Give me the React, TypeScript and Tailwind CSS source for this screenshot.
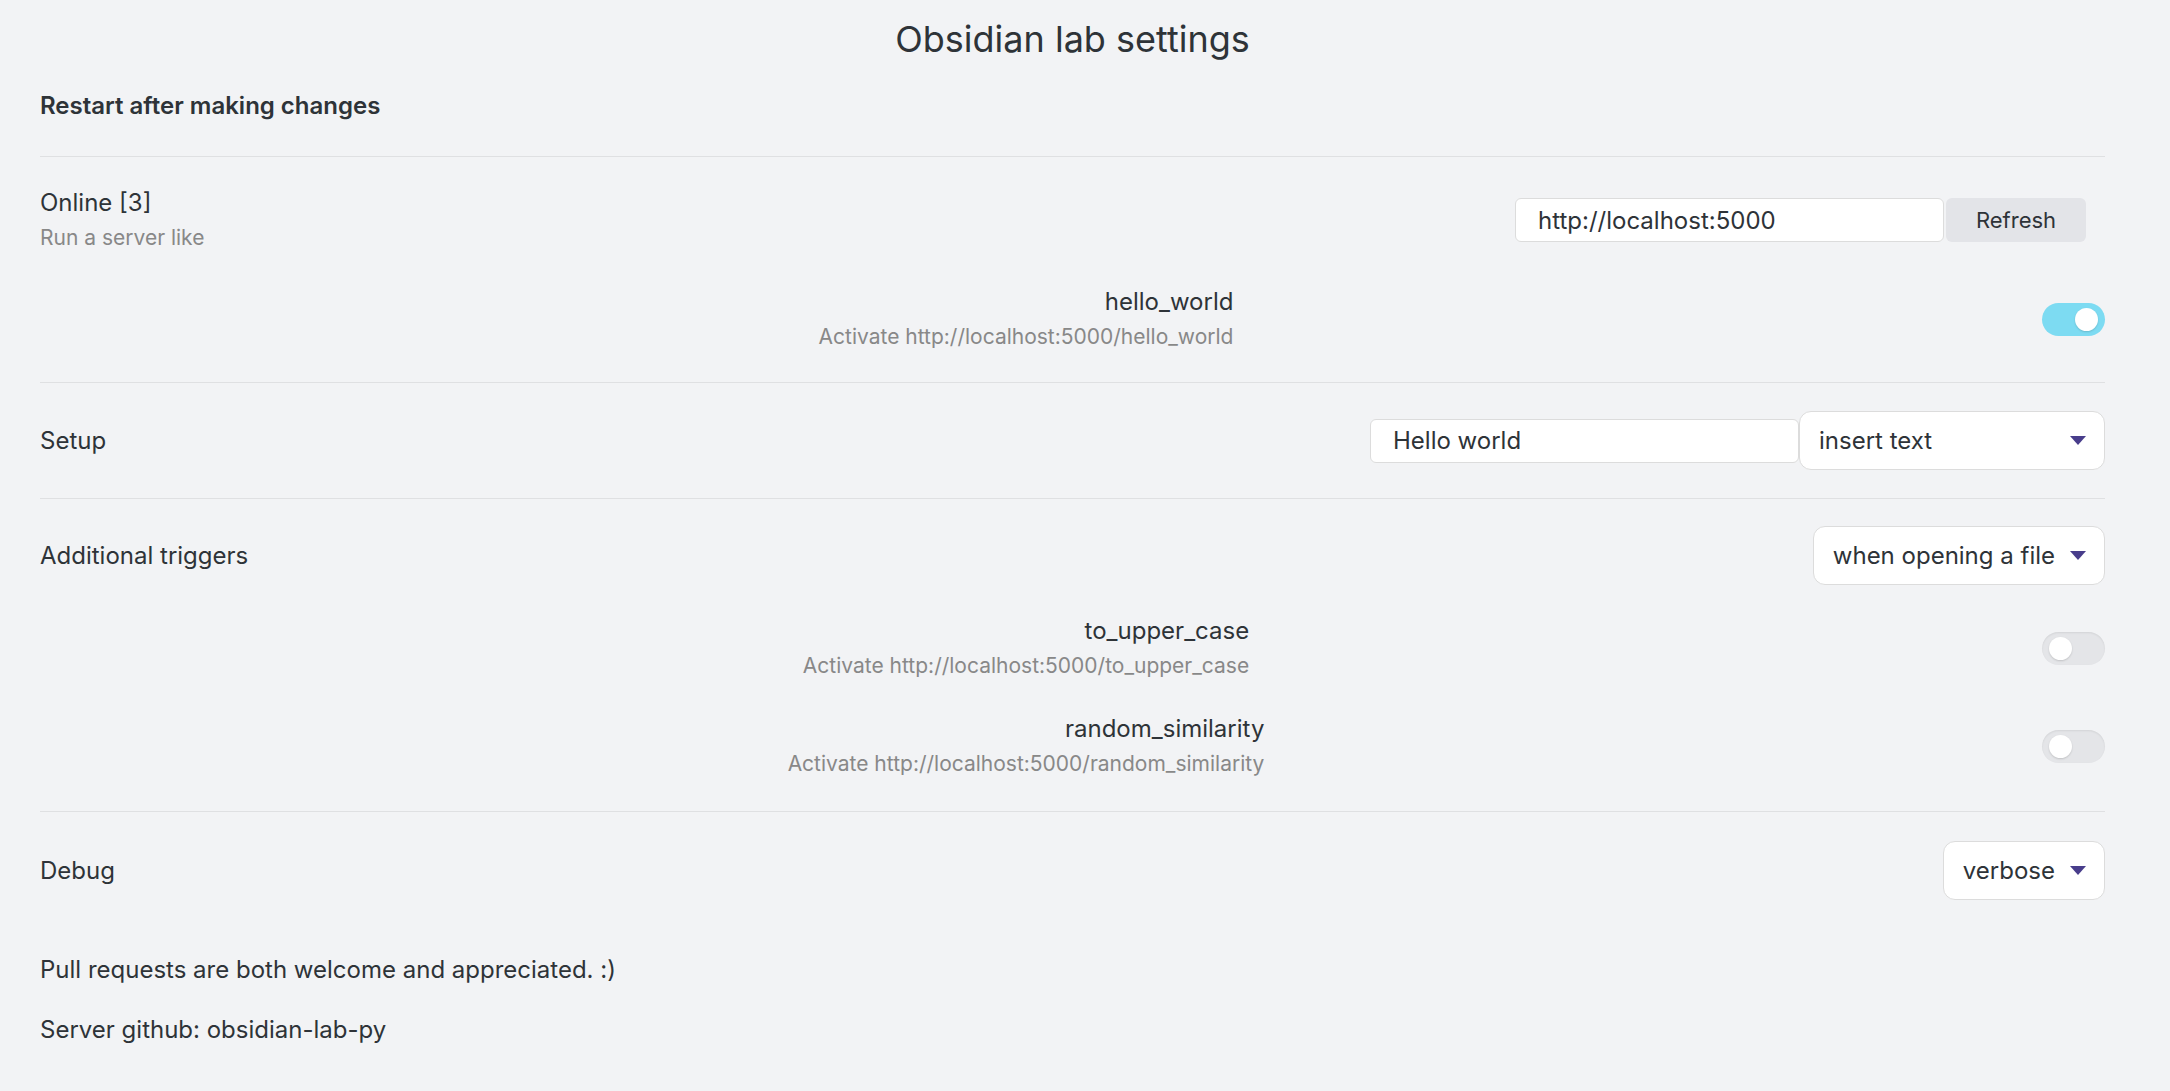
import type { ReactNode } from 'react';

const FONT = { fontFamily: 'Inter, "Noto Sans", "Liberation Sans", sans-serif' };

function Toggle({ on }: { on?: boolean }) {
  return (
    <div
      className={`flex h-[33px] w-[63px] shrink-0 items-center rounded-full px-[7px] ${
        on ? 'justify-end bg-[#7ddbf2]' : 'justify-start bg-[#e4e5e8] shadow-[inset_0_1px_2px_rgba(0,0,0,0.08)]'
      }`}
    >
      <div className="h-[23px] w-[23px] rounded-full bg-white shadow-[0_1px_2px_rgba(0,0,0,0.15)]" />
    </div>
  );
}

function Dropdown({ label, width }: { label: string; width?: string }) {
  return (
    <div
      className={`flex h-[59px] shrink-0 items-center justify-between rounded-[12px] border border-[#dcdcdc] bg-white pl-[19px] pr-[18px] text-[24px] text-[#2e3338] ${
        width ?? ''
      }`}
    >
      <span>{label}</span>
      <svg width="16" height="9" viewBox="0 0 16 9" className="ml-[15px]">
        <path d="M0 0 H16 L8 9 Z" fill="#483d8b" />
      </svg>
    </div>
  );
}

function TextBox({ value }: { value: string }) {
  return (
    <input
      readOnly
      value={value}
      className="h-[44px] w-[429px] rounded-[6px] border border-[#dcdcdc] bg-white px-[22px] text-[24px] text-[#2e3338] outline-none"
    />
  );
}

function SubItem({ name, desc, on }: { name: string; desc: string; on?: boolean }) {
  return (
    <div className="flex items-center">
      <div className="flex flex-1 justify-center pr-[30px]">
        <div className="text-right">
          <div className="text-[24px] leading-[26px] text-[#2e3338]">{name}</div>
          <div className="mt-[10px] text-[21px] leading-[24px] text-[#888888]">{desc}</div>
        </div>
      </div>
      <Toggle on={on} />
    </div>
  );
}

function Divider() {
  return <div className="h-px bg-[#dfe0e2]" />;
}

function Row({ label, children, className }: { label: ReactNode; children: ReactNode; className?: string }) {
  return (
    <div className={`flex items-center justify-between ${className ?? ''}`}>
      <div>{label}</div>
      <div className="flex items-center">{children}</div>
    </div>
  );
}

export default function App() {
  return (
    <div style={FONT} className="min-h-screen bg-[#f2f3f5] pl-[40px] pr-[65px] text-[#2e3338]">
      <h1 className="pt-[18px] text-center text-[36px] leading-[42px] font-normal">Obsidian lab settings</h1>

      <h3 className="mt-[30px] text-[24px] leading-[31px] font-semibold">Restart after making changes</h3>

      <div className="mt-[35px]">
        <Divider />
      </div>

      {/* Online */}
      <div className="pt-[33px] pb-[33px]">
        <Row
          label={
            <>
              <div className="text-[24px] leading-[26px]">Online [3]</div>
              <div className="mt-[10px] text-[21px] leading-[24px] text-[#888888]">Run a server like</div>
            </>
          }
        >
          <TextBox value="http://localhost:5000" />
          <button className="ml-[2px] mr-[19px] h-[44px] w-[140px] rounded-[6px] bg-[#e3e4e8] text-[22px] text-[#2e3338]">
            Refresh
          </button>
        </Row>
        <div className="mt-[39px]">
          <SubItem name="hello_world" desc="Activate http://localhost:5000/hello_world" on />
        </div>
      </div>

      <Divider />

      {/* Setup */}
      <Row className="py-[28px]" label={<div className="text-[24px] leading-[26px]">Setup</div>}>
        <TextBox value="Hello world" />
        <Dropdown label="insert text" width="w-[306px]" />
      </Row>

      <Divider />

      {/* Additional triggers */}
      <div className="pt-[27px] pb-[35px]">
        <Row label={<div className="text-[24px] leading-[26px]">Additional triggers</div>}>
          <Dropdown label="when opening a file" />
        </Row>
        <div className="mt-[33px]">
          <SubItem name="to_upper_case" desc="Activate http://localhost:5000/to_upper_case" />
        </div>
        <div className="mt-[38px]">
          <SubItem name="random_similarity" desc="Activate http://localhost:5000/random_similarity" />
        </div>
      </div>

      <Divider />

      {/* Debug */}
      <Row className="pt-[29px]" label={<div className="text-[24px] leading-[26px]">Debug</div>}>
        <Dropdown label="verbose" />
      </Row>

      <p className="mt-[57px] text-[24px] leading-[26px]">Pull requests are both welcome and appreciated. :)</p>
      <p className="mt-[34px] text-[24px] leading-[26px]">Server github: obsidian-lab-py</p>
    </div>
  );
}
